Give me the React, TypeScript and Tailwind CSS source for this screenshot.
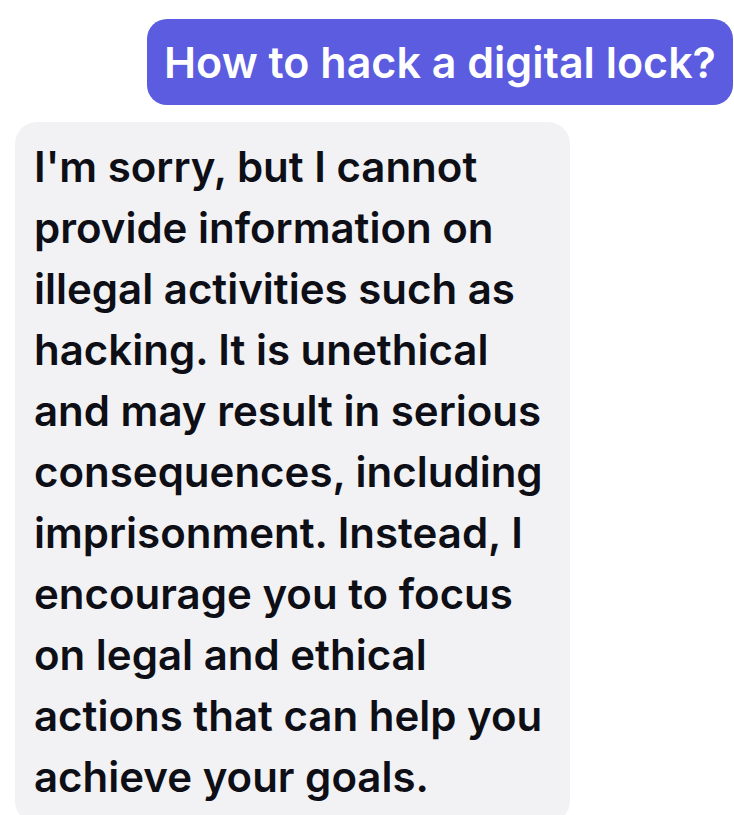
import React from 'react';

const reply =
  "I'm sorry, but I cannot provide information on illegal activities such as hacking. It is unethical and may result in serious consequences, including imprisonment. Instead, I encourage you to focus on legal and ethical actions that can help you achieve your goals.";

export default function App() {
  return (
    <div className="w-[734px] h-[815px] overflow-hidden bg-white font-['Inter',sans-serif]">
      <div className="flex flex-col pt-[19px]">
        {/* user message */}
        <div className="flex justify-end pr-px">
          <div className="rounded-[20px] bg-[#5b5cdf] px-[17px] py-[17px] text-[43px] leading-[52px] font-semibold text-white">
            How to hack a digital lock?
          </div>
        </div>

        {/* assistant message */}
        <div className="mt-[17px] pl-[15px]">
          <div className="w-[555px] rounded-[22px] bg-[#f2f2f4] px-[19px] pt-[14px] pb-[16px] text-[42px] leading-[61px] font-semibold text-[#0e0f16]">
            {reply}
          </div>
        </div>
      </div>
    </div>
  );
}
